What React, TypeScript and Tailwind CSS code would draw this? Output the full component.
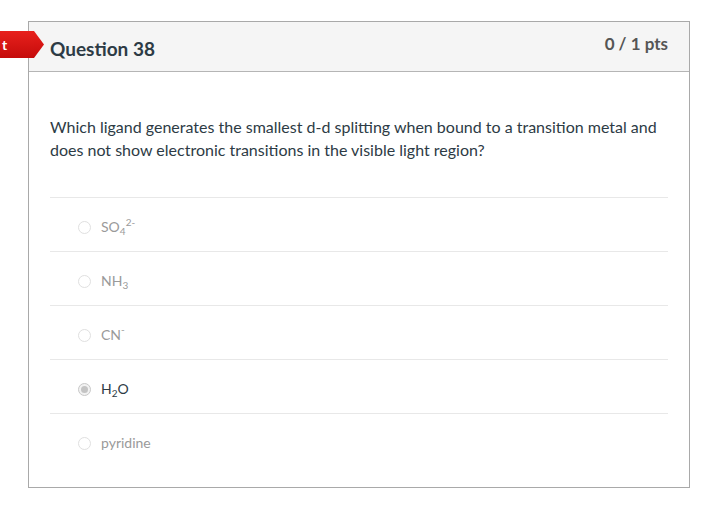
import React from "react";

const font = { fontFamily: "Lato, 'Open Sans', sans-serif" };

function Radio({ checked }: { checked?: boolean }) {
  return (
    <span
      className={
        "flex h-[13px] w-[13px] shrink-0 items-center justify-center rounded-full border " +
        (checked ? "border-[#c8c8c8] bg-[#f2f2f2]" : "border-[#e0e0e0] bg-white")
      }
    >
      {checked && <span className="block h-[7px] w-[7px] rounded-full bg-[#c4c4c4]" />}
    </span>
  );
}

function Row({ children, checked }: { children: React.ReactNode; checked?: boolean }) {
  return (
    <div className="flex h-[54px] items-center border-t border-[#e8e8e8] pt-[5px] pl-[28px]">
      <Radio checked={checked} />
      <span
        className={
          "ml-[10px] text-[14px] leading-[16px] " + (checked ? "text-[#2d3b45]" : "text-[#9a9a9a]")
        }
      >
        {children}
      </span>
    </div>
  );
}

function Sub({ children }: { children: React.ReactNode }) {
  return <span className="relative top-[3px] align-baseline text-[10px]">{children}</span>;
}

function Sup({ children, cls }: { children: React.ReactNode; cls?: string }) {
  return <span className={"relative align-baseline text-[10px] " + (cls ?? "top-[-6px]")}>{children}</span>;
}

export default function App() {
  return (
    <div className="relative min-h-[512px] w-[712px] bg-white pt-[21px] pl-[28px]" style={font}>
      <div className="absolute left-0 top-[31px] z-10 flex h-[27px] items-center">
        <div className="flex h-[27px] w-[34px] items-center bg-gradient-to-b from-[#e8201c] to-[#c50b0b] pl-[2px] text-[14px] font-bold text-white">
          t
        </div>
        <svg width="10" height="27" viewBox="0 0 10 27" className="block">
          <defs>
            <linearGradient id="fg" x1="0" y1="0" x2="0" y2="1">
              <stop offset="0" stopColor="#e8201c" />
              <stop offset="1" stopColor="#c50b0b" />
            </linearGradient>
          </defs>
          <polygon points="0,0 10,13.5 0,27" fill="url(#fg)" />
        </svg>
      </div>
      <div className="w-[662px] border border-[#a9a9a9]">
        <div className="flex h-[50px] justify-between border-b border-[#b5b5b5] bg-[#f5f5f5] px-[21px]">
          <div className="pt-[15px] text-[19px] font-bold leading-[24px] text-[#2d3b45]">Question 38</div>
          <div className="pt-[12px] text-[17px] font-bold leading-[20px] text-[#555555]">0 / 1 pts</div>
        </div>
        <div className="px-[21px] pt-[43px] pb-[20px]">
          <p className="text-[16px] leading-[23px] text-[#2d3b45]">
            Which ligand generates the smallest d-d splitting when bound to a transition metal and does not show
            electronic transitions in the visible light region?
          </p>
          <div className="mt-[36px]">
            <Row>
              SO<Sub>4</Sub>
              <Sup>2-</Sup>
            </Row>
            <Row>
              NH<Sub>3</Sub>
            </Row>
            <Row>
              CN<Sup cls="top-[-7px]">-</Sup>
            </Row>
            <Row checked>
              H<Sub>2</Sub>O
            </Row>
            <Row>pyridine</Row>
          </div>
        </div>
      </div>
    </div>
  );
}
